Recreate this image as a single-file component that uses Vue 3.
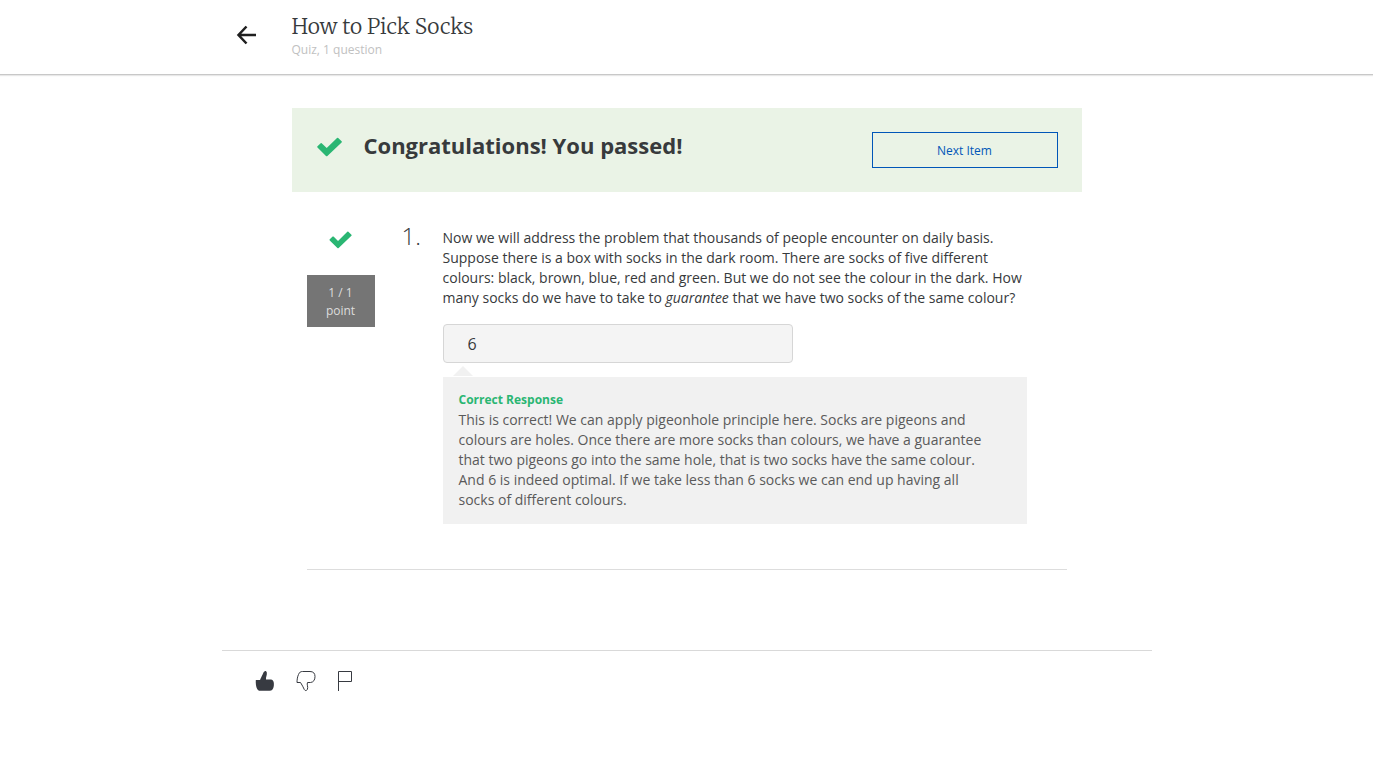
<script setup>
import { ref } from 'vue'

const answer = ref('6')
const feedback = ref('like')
</script>

<template>
  <div class="page">
    <header class="topbar">
      <div class="topbar-inner">
        <a class="back" href="#" aria-label="Back">
          <svg width="22" height="20" viewBox="0 0 22 20" aria-hidden="true">
            <path d="M20 10H3M10.500 1.500L2.500 10l8 8.500" fill="none" stroke="#1f1f1f" stroke-width="2.500" />
          </svg>
        </a>
        <div class="heading">
          <h1>How to Pick Socks</h1>
          <p>Quiz, 1 question</p>
        </div>
      </div>
    </header>

    <main class="content">
      <section class="banner">
        <svg class="banner-check" width="26" height="20" viewBox="0 0 26 20" aria-hidden="true">
          <path d="M0.500 9.300L3.700 6.200Q4.200 5.800 4.700 6.200L9.700 11L20 0.900Q20.600 0.400 21.200 0.900L24.600 4.200Q25.200 4.800 24.600 5.400L10.400 18.900Q9.700 19.500 9 18.900L0.500 10.500Q-0.100 9.900 0.500 9.300Z" fill="#2ab673" />
        </svg>
        <h2>Congratulations! You passed!</h2>
        <button type="button" class="next">Next Item</button>
      </section>

      <section class="question">
        <div class="score">
          <svg width="24" height="18" viewBox="0 0 26 20" aria-hidden="true">
            <path d="M0.500 9.300L3.700 6.200Q4.200 5.800 4.700 6.200L9.700 11L20 0.900Q20.600 0.400 21.200 0.900L24.600 4.200Q25.200 4.800 24.600 5.400L10.400 18.900Q9.700 19.500 9 18.900L0.500 10.500Q-0.100 9.900 0.500 9.300Z" fill="#2ab673" />
          </svg>
          <div class="points">1 / 1<br />point</div>
        </div>
        <div class="number">1.</div>
        <div class="body">
          <label class="prompt" for="answer">Now we will address the problem that thousands of people encounter on daily basis. Suppose there is a box with socks in the dark room. There are socks of five different colours: black, brown, blue, red and green. But we do not see the colour in the dark. How many socks do we have to take to <em>guarantee</em> that we have two socks of the same colour?</label>
          <input id="answer" v-model="answer" class="answer" type="text" readonly />
          <div class="response">
            <strong>Correct Response</strong>
            <p>This is correct! We can apply pigeonhole principle here. Socks are pigeons and colours are holes. Once there are more socks than colours, we have a guarantee that two pigeons go into the same hole, that is two socks have the same colour. And 6 is indeed optimal. If we take less than 6 socks we can end up having all socks of different colours.</p>
          </div>
        </div>
      </section>
    </main>

    <footer class="feedback">
      <button type="button" aria-label="Like" :aria-pressed="feedback === 'like'" @click="feedback = 'like'">
        <svg width="20" height="22" viewBox="0 0 20 22" aria-hidden="true">
          <path d="M9.800 1.200C8.500 1.800 8.300 3 7.600 4.500C6.500 6.800 5.700 8.500 5 10H0.800C0.600 13.500 1 17 2.200 19C2.900 20.200 3.500 20.800 5 20.800H14.500C17.300 20.800 18.300 19 18.800 16C19.200 13 18.800 10 16 9.500H11C10.700 7 12.300 5 11.800 2.600C11.500 1.400 10.700 0.900 9.800 1.200Z" fill="#373a41" />
        </svg>
      </button>
      <button type="button" aria-label="Dislike" :aria-pressed="feedback === 'dislike'" @click="feedback = 'dislike'">
        <svg width="20" height="22" viewBox="0 0 20 22" aria-hidden="true">
          <path d="M1 12.500C1 9.500 1.500 6.500 2.500 4.500C3.500 2.200 4.500 1.500 6.500 1.500H14C17.500 1.500 19 3.500 19 6.500C19 10 17.500 12.200 14.500 12.500H11.500C10.500 14.500 12.500 17 11.300 19.500C10.500 21 9 20.800 8.300 19.500C7.500 17.500 6 15 4.500 12.500Z" fill="none" stroke="#373a41" />
        </svg>
      </button>
      <button type="button" aria-label="Report" @click="feedback = 'report'">
        <svg width="16" height="22" viewBox="0 0 16 22" aria-hidden="true">
          <path d="M1.500 21V1.500H14.500V11.500H1.500" fill="none" stroke="#373a41" />
        </svg>
      </button>
    </footer>
  </div>
</template>

<style>
body {
  background: #fff;
}
</style>

<style scoped>
.page {
  font-family: "Open Sans", "Noto Sans", sans-serif;
  font-size: 14px;
  line-height: 20px;
  color: #373a3c;
}

h1,
h2,
p {
  margin: 0;
}

button {
  font: inherit;
  cursor: pointer;
}

.topbar {
  border-bottom: 1px solid #c8c8c8;
  box-shadow: 0 1px 1px #e8e8e8;
}

.topbar-inner {
  box-sizing: border-box;
  max-width: 930px;
  min-height: 74px;
  margin: 0 auto;
  padding: 12px 14px 0;
  display: flex;
}

.back {
  flex: none;
  width: 56px;
  padding-top: 13px;
}

svg {
  display: block;
}

h1 {
  font: 300 21px/30px Merriweather, "Noto Serif", "DejaVu Serif", serif;
}

.heading p {
  font-size: 12px;
  line-height: 16px;
  color: #c1c1c1;
}

.content {
  max-width: 790px;
  margin: 33px auto 0;
}

.banner {
  display: flex;
  align-items: flex-start;
  padding: 24px;
  background: #eaf3e6;
}

.banner-check {
  flex: none;
  margin: 5px 21px 0 1px;
}

h2 {
  flex: 1;
  font-size: 22px;
  line-height: 26px;
  font-weight: 700;
}

.next {
  width: 186px;
  height: 36px;
  padding: 2px 0 0;
  border: 1px solid #0156b8;
  background: transparent;
  color: #0156b8;
  font-size: 12px;
}

.question {
  display: flex;
  margin: 0 15px;
  padding: 36px 40px 45px 0;
  border-bottom: 1px solid #ddd;
}

.score {
  flex: none;
  width: 68px;
  padding-top: 3px;
}

.score svg {
  margin: 0 auto;
}

.points {
  margin-top: 26px;
  padding: 9px 0 7px;
  background: #757575;
  color: #ddd;
  font-size: 12px;
  line-height: 18px;
  text-align: center;
}

.number {
  flex: none;
  width: 41px;
  margin-left: 27px;
  font-size: 24px;
  line-height: 16px;
  font-weight: 300;
}

.body {
  flex: 1;
}

.prompt {
  display: block;
}

.answer {
  box-sizing: border-box;
  display: block;
  width: 60%;
  height: 39px;
  margin-top: 16px;
  padding: 0 24px;
  border: 1px solid #d6d6d6;
  border-radius: 4px;
  background: #f4f4f4;
  color: #373a3c;
  font: inherit;
  font-size: 16px;
}

.response {
  position: relative;
  margin-top: 14px;
  padding: 13px 40px 14px 16px;
  background: #f1f1f1;
  color: #5a5a5a;
}

.response::before {
  content: "";
  position: absolute;
  left: 10px;
  top: -11px;
  border: 10px solid transparent;
  border-top-width: 0;
  border-bottom-color: #f1f1f1;
}

.response strong {
  display: block;
  color: #2ab673;
  font-size: 12px;
}

.feedback {
  box-sizing: border-box;
  max-width: 930px;
  margin: 80px auto 0;
  padding: 19px 33px;
  display: flex;
  gap: 21px;
  border-top: 1px solid #d9d9d9;
}

.feedback button {
  padding: 0;
  border: 0;
  background: none;
}
</style>
